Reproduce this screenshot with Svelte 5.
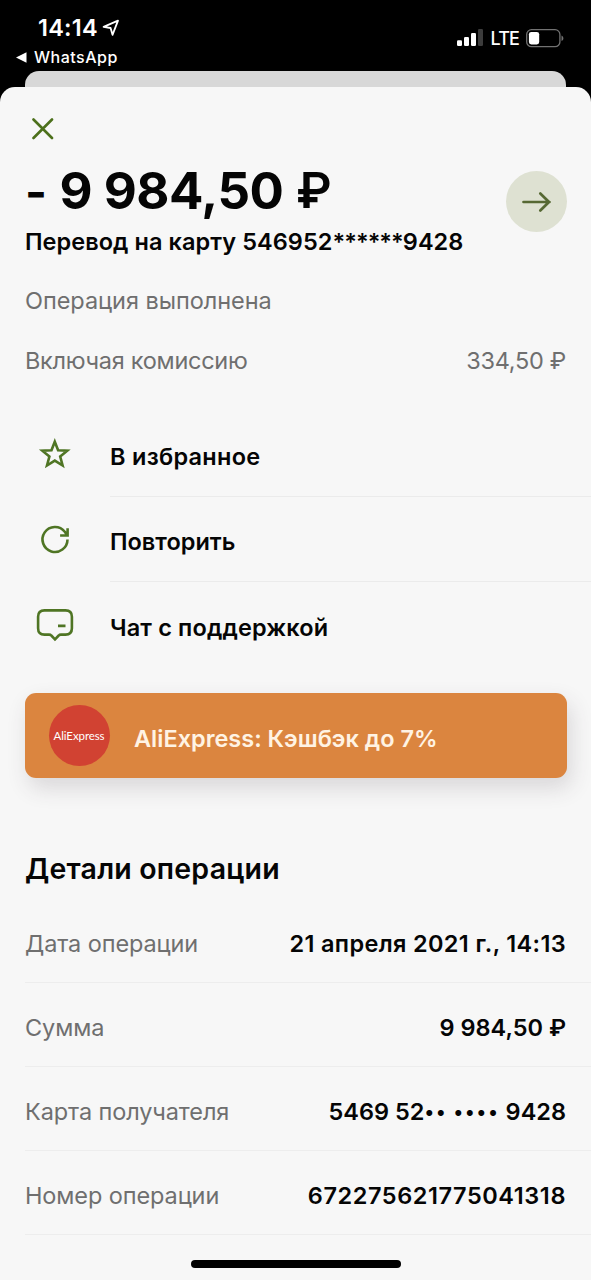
<script>
  const details = [
    { label: 'Дата операции', value: '21 апреля 2021 г., 14:13', cls: 'date' },
    { label: 'Сумма', value: '9 984,50 ₽', cls: 'sum' },
    { label: 'Карта получателя', value: '5469 52•• •••• 9428', cls: 'card' },
    { label: 'Номер операции', value: '672275621775041318', cls: 'number' }
  ];
  // Masked digits are drawn smaller than the visible ones.
  const split = (value) => value.split(/(•+)/);
</script>

<div class="screen">
  <header class="status">
    <div class="left">
      <div class="clock">
        <span class="time">14:14</span>
        <svg width="18" height="18" viewBox="0 0 18 18"><path d="M1.6 7.9 16 1.6 10.5 15.8 8.6 9z" fill="none" stroke="#fff" stroke-width="1.8" stroke-linejoin="round" /></svg>
      </div>
      <div class="back">
        <svg width="11" height="11" viewBox="0 0 11 11"><path d="M0 5.5 10.5.3v10.4z" fill="#fff" /></svg>
        <span>WhatsApp</span>
      </div>
    </div>
    <div class="right">
      <svg width="27" height="18" viewBox="0 0 27 18">
        <rect x="0" y="11.3" width="5" height="5.7" rx="1.2" fill="#fff" />
        <rect x="7" y="8" width="5" height="9" rx="1.2" fill="#fff" />
        <rect x="14" y="4" width="5" height="13" rx="1.2" fill="#fff" />
        <rect x="21" y="0" width="5" height="17" rx="1.2" fill="#3c3c3c" />
      </svg>
      <span class="lte">LTE</span>
      <svg width="38" height="19" viewBox="0 0 38 19">
        <rect x=".7" y=".7" width="33.2" height="17" rx="4.8" fill="none" stroke="#727272" stroke-width="1.3" />
        <rect x="2.9" y="2.9" width="10.3" height="12.6" rx="2.4" fill="#fff" />
        <path d="M35.5 6.4c2.5 1 2.5 4.600 0 5.600z" fill="#727272" />
      </svg>
    </div>
  </header>

  <div class="behind"></div>
  <main class="sheet">
    <div class="close">
      <svg width="22" height="22" viewBox="0 0 22 22"><path d="M1.500 1.500 20 20M20 1.500 1.500 20" stroke="#4c701b" stroke-width="2.600" stroke-linecap="round" /></svg>
    </div>

    <section class="top">
      <div>
        <h1><span class="minus">-</span><span class="total">9 984,50</span><span class="ruble">₽</span></h1>
        <p class="subtitle"><span class="to">Перевод на карту 546952</span><span class="stars">******</span><span>9428</span></p>
      </div>
      <div class="go">
        <svg width="30" height="22" viewBox="0 0 30 22"><path d="M2.500 11h26M19.300 2.500 28 11l-8.700 8.500" fill="none" stroke="#566833" stroke-width="2.700" stroke-linecap="round" stroke-linejoin="round" /></svg>
      </div>
    </section>

    <p class="muted done"><span>Операция выполнена</span></p>
    <p class="muted fee"><span class="including">Включая комиссию</span><span class="amount">334,50 ₽</span></p>

    <ul class="actions">
      <li>
        <div class="icon"><svg width="38" height="38" viewBox="0 0 38 38"><path d="M18.800 5.700 22.100 14.200 31.300 14.700 24.200 20.500 26.600 29.500 18.800 24.600 11 29.500 13.400 20.500 6.300 14.700 15.500 14.200z" fill="none" stroke="#4f7524" stroke-width="2.600" /></svg></div>
        <div class="label"><span class="fav">В избранное</span></div>
      </li>
      <li>
        <div class="icon"><svg width="38" height="38" viewBox="0 0 38 38"><path d="M31.500 18.500A12.500 12.500 0 1 1 28.800 10.700L31 14M31.600 7.300v7.200h-7.500" fill="none" stroke="#4f7524" stroke-width="2.600" /></svg></div>
        <div class="label"><span>Повторить</span></div>
      </li>
      <li>
        <div class="icon"><svg width="38" height="38" viewBox="0 0 38 38"><path d="M8.500 4.400h21q6.400 0 6.400 6.400v11.500q0 6.300-6.400 6.300H25q-1.500 0-2.300.9L19 33.300l-3.700-3.800q-.8-.9-2.300-.9H8.500q-6.400 0-6.400-6.300V10.800q0-6.400 6.400-6.400zM22 19.900h7.500" fill="none" stroke="#4f7524" stroke-width="2.600" /></svg></div>
        <div class="label"><span class="chat">Чат с поддержкой</span></div>
      </li>
    </ul>

    <div class="banner">
      <div class="logo"><span>AliExpress</span></div>
      <span class="offer">AliExpress: Кэшбэк до 7%</span>
    </div>

    <h2><span>Детали операции</span></h2>
    <dl>
      {#each details as d}
        <div class="row">
          <dt>{d.label}</dt>
          <dd class={d.cls}>{#each split(d.value) as part}<span class:mask={part.startsWith('•')}>{part}</span>{/each}</dd>
        </div>
      {/each}
    </dl>
    <div class="home"></div>
  </main>
</div>

<style>
  :global(body) { margin: 0; background: #000; }
  .screen {
    box-sizing: border-box; width: 591px; height: 1280px; overflow: hidden;
    display: flex; flex-direction: column; background: #000; color: #050505;
    font-family: Inter, "Liberation Sans", sans-serif; font-size: 23.5px;
    white-space: nowrap;
  }
  svg { display: block; flex: none; }
  h1, h2, p, ul, dl, dd { margin: 0; padding: 0; }
  .status { height: 71px; flex: none; display: flex; justify-content: space-between; color: #fff; }
  .left { padding: 14px 0 0 16px; }
  .clock { display: flex; align-items: center; gap: 4px; padding-left: 22px; height: 27px; }
  .time { font-size: 23.5px; font-weight: 600; letter-spacing: .25px; }
  .back { display: flex; align-items: center; gap: 7px; height: 32px; font-size: 16px; font-weight: 500; letter-spacing: .5px; }
  .right { display: flex; align-items: center; height: 20px; padding: 28px 27px 0 0; }
  .lte { font-size: 18px; font-weight: 500; letter-spacing: -.9px; margin: 1px 7px 0 7px; }
  .behind { height: 16px; flex: none; margin: 0 25px 0 25px; background: #d8d8d8; border-radius: 14px 14px 0 0; }
  .sheet {
    flex: 1; display: flex; flex-direction: column; background: #f7f7f7;
    border-radius: 15px 15px 0 0; padding-left: 25px;
  }
  .close { padding: 31px 0 0 7px; height: 29px; }
  .top { display: flex; justify-content: space-between; padding-right: 24.500px; height: 124px; }
  h1 { display: flex; font-size: 51px; line-height: 60px; font-weight: 700; padding-top: 14px; height: 60px; }
  .minus { width: 34.500px; font-size: 47px; padding-top: 1px; font-feature-settings: "calt" 0; }
  .total { width: 236.500px; letter-spacing: -.5px; }
  .ruble { font-size: 49px; font-weight: 600; }
  .subtitle { display: flex; font-weight: 600; line-height: 30px; height: 30px; padding-top: 6px; }
  .to { letter-spacing: .06px; }
  .stars { letter-spacing: -.95px; }
  .go {
    width: 61px; height: 61px; margin-top: 24px; border-radius: 50%; background: #dee1d2;
    display: flex; align-items: center; justify-content: center;
  }
  .muted { color: #6f6f6f; line-height: 30px; height: 30px; display: flex; justify-content: space-between; }
  .done { padding-top: 15px; letter-spacing: -.05px; }
  .fee { padding: 30px 25px 0 0; }
  .including { letter-spacing: -.28px; }
  .amount { letter-spacing: -.3px; }
  .actions { list-style: none; margin-top: 35.500px; }
  li { display: flex; height: 85.3px; }
  .icon { width: 85px; flex: none; padding: 24px 0 0 11px; box-sizing: border-box; }
  .label { flex: 1; display: flex; align-items: center; border-bottom: 1px solid #ebebeb; padding-top: 6px; box-sizing: border-box; font-weight: 600; }
  .fav { letter-spacing: .28px; }
  .chat { letter-spacing: .14px; }
  li:last-child .label { border-color: transparent; }
  .banner {
    flex: none; width: 542px; height: 85px; margin-top: 25.500px; margin-left: -.5px; border-radius: 11px;
    background: #db853f; display: flex; align-items: center; box-sizing: border-box;
    padding-left: 24px; box-shadow: 4px 10px 22px rgba(60, 50, 60, .16);
  }
  .logo {
    width: 61px; height: 61px; border-radius: 50%; background: #d14232; color: #fff;
    display: flex; align-items: center; justify-content: center;
    font: 400 11.500px Lato, sans-serif; letter-spacing: -.1px; margin-right: 24.500px;
  }
  .offer { color: #fff3e3; font-weight: 600; padding-top: 6px; }
  h2 { font-size: 28.500px; line-height: 36px; font-weight: 600; letter-spacing: .2px; margin-top: 73px; }
  dl { margin-top: 12px; }
  .row {
    display: flex; justify-content: space-between; align-items: center; height: 84px;
    box-sizing: border-box; padding: 7px 25px 0 0; border-bottom: 1px solid #ededed;
  }
  dt { color: #6f6f6f; letter-spacing: -.1px; }
  dd { font-weight: 600; }
  .date { letter-spacing: .35px; }
  .number { letter-spacing: .57px; }
  .mask { font-size: 19px; line-height: 1; letter-spacing: 2px; vertical-align: 1.500px; }
  .home { flex: none; width: 210px; height: 8px; border-radius: 4px; background: #000; margin: 25px 0 0 166px; }
</style>
